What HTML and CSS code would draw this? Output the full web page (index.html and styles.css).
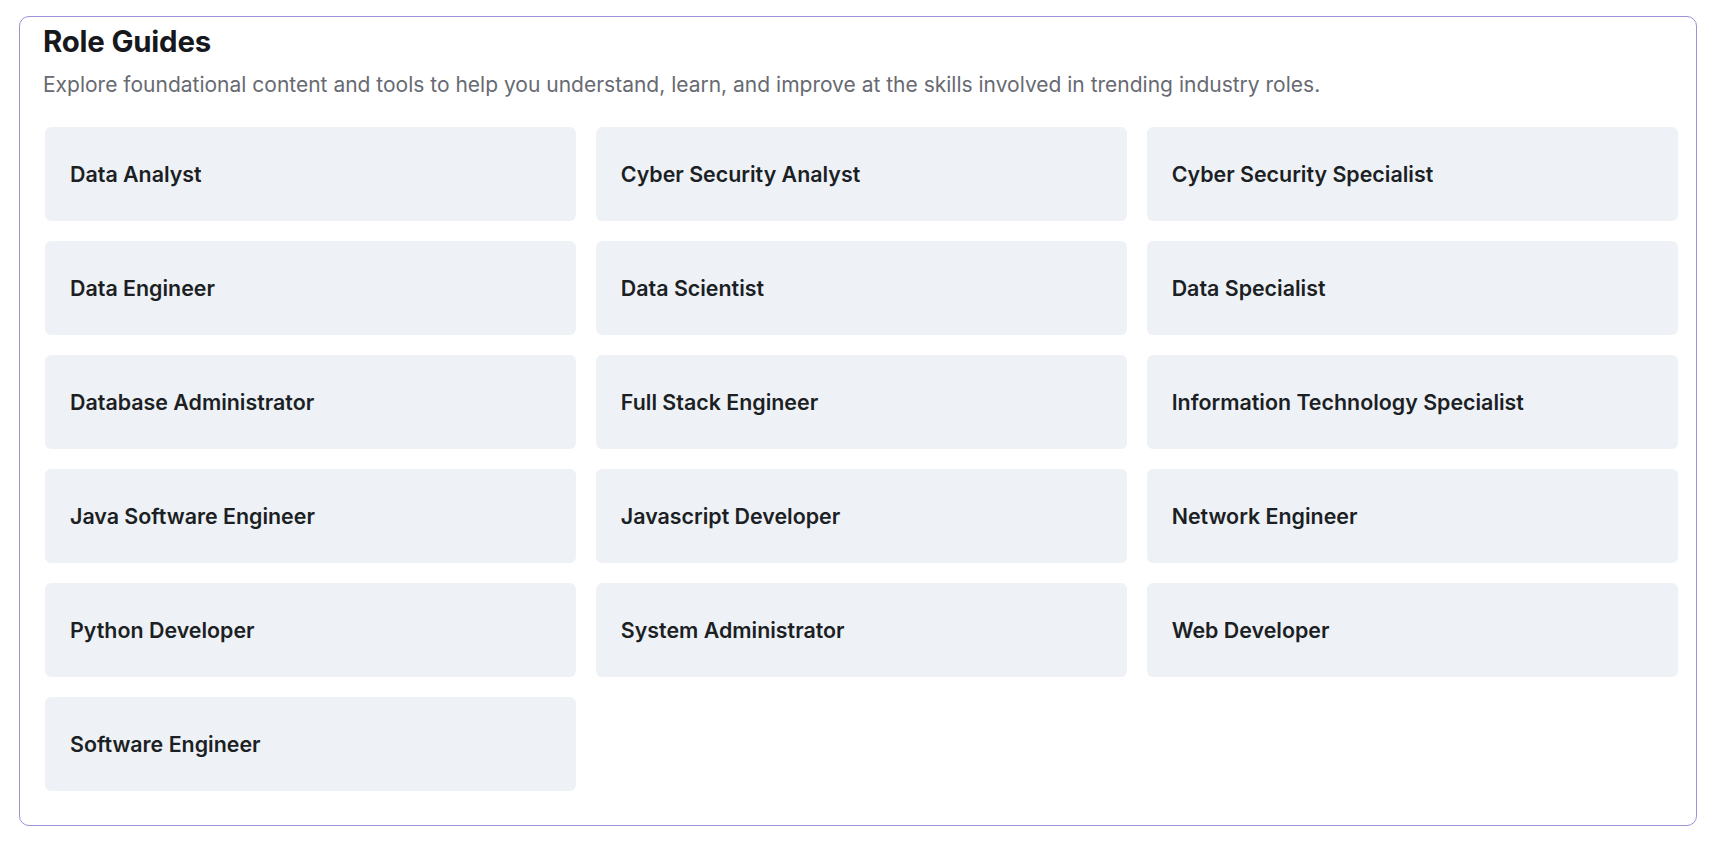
FILE: index.html
```html
<!DOCTYPE html>
<html lang="en">
  <head>
    <meta charset="UTF-8" />
    <title>Role Guides</title>
    <link rel="stylesheet" href="styles.css">
  </head>
  <body>
    <section class="guides">
      <h2>Role Guides</h2>
      <p class="lead">Explore foundational content and tools to help you understand, learn, and improve at the skills involved in trending industry roles.</p>

      <div class="role-grid">
        <a class="role" href="#">Data Analyst</a>
        <a class="role" href="#">Cyber Security Analyst</a>
        <a class="role" href="#">Cyber Security Specialist</a>
        <a class="role" href="#">Data Engineer</a>
        <a class="role" href="#">Data Scientist</a>
        <a class="role" href="#">Data Specialist</a>
        <a class="role" href="#">Database Administrator</a>
        <a class="role" href="#">Full Stack Engineer</a>
        <a class="role" href="#">Information Technology Specialist</a>
        <a class="role" href="#">Java Software Engineer</a>
        <a class="role" href="#">Javascript Developer</a>
        <a class="role" href="#">Network Engineer</a>
        <a class="role" href="#">Python Developer</a>
        <a class="role" href="#">System Administrator</a>
        <a class="role" href="#">Web Developer</a>
        <a class="role" href="#">Software Engineer</a>
      </div>
    </section>
  </body>
</html>
```

FILE: styles.css
```css
body {
  margin: 16px 19px 20px;
  font-family: Inter, "Noto Sans", sans-serif;
  background-color: #ffffff;
  color: #16181d;
}

.guides {
  border: 1px solid #9f90da;
  border-radius: 10px;
  padding: 7px 18px 34px 23px;
}

.guides h2 {
  margin: 0;
  font-size: 29.4px;
  line-height: 1.2;
  font-weight: 700;
  letter-spacing: -0.2px;
}

.lead {
  margin: 12px 0 28px;
  font-size: 21px;
  line-height: 28px;
  color: #676a72;
}

.role-grid {
  display: grid;
  grid-template-columns: repeat(3, 1fr);
  gap: 20px 19.5px;
  margin-left: 2px;
}

.role {
  display: flex;
  align-items: center;
  height: 94px;
  padding: 0 25px;
  border-radius: 6px;
  background-color: #eef2f7;
  color: #1c1f24;
  font-size: 21.4px;
  font-weight: 600;
  text-decoration: none;
}

.role:hover {
  background-color: #e4e9f2;
}
```
